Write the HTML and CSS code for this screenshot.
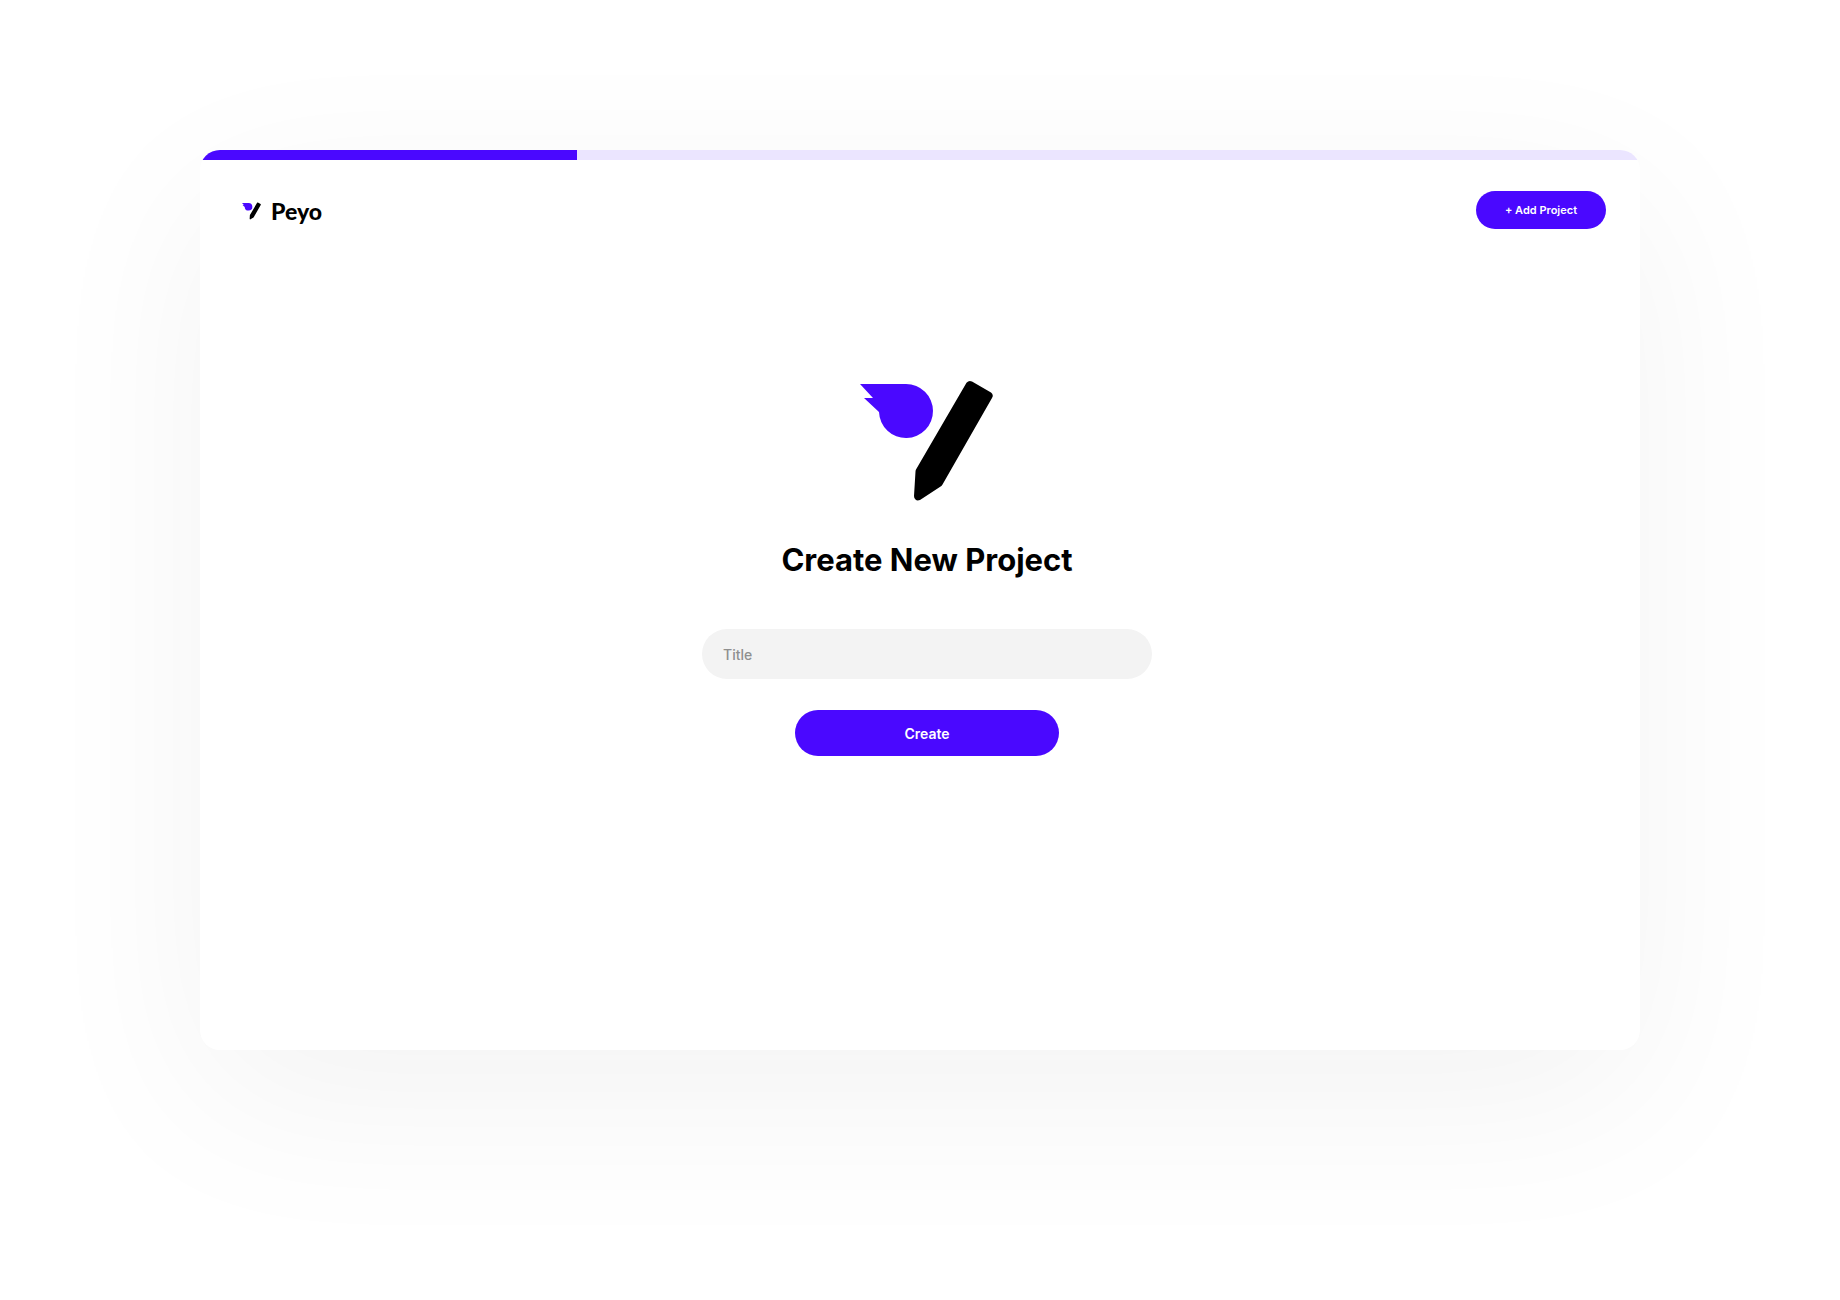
FILE: index.html
```html
<!DOCTYPE html>
<html lang="en">
<head>
<meta charset="utf-8">
<meta name="viewport" content="width=device-width, initial-scale=1">
<title>Peyo – Create New Project</title>
<link rel="stylesheet" href="styles.css">
</head>
<body>
<svg class="symbols" aria-hidden="true">
  <symbol id="mark" viewBox="0 0 134 122">
    <path fill="#4a08ff" d="M0 4H46A27 27 0 1 1 19 32L4 18H13Z"/>
    <path fill="#000" d="M106.500 2.700Q109 0 112 1.500L131 12.500Q134 15 132 18L82.500 104.500Q82 105.500 81 106.200L60 120Q57 121 55.500 119.500Q54 118.500 54 116L55.500 91.500Q55.500 90.500 56 89.500Z"/>
  </symbol>
</svg>
<div class="window">
  <div class="progress"><div class="progress-value" style="width: 26.200%"></div></div>
  <header class="topbar">
    <a class="brand" href="#"><svg class="brand-mark" aria-hidden="true"><use href="#mark"/></svg><span>Peyo</span></a>
    <button class="button button-small" type="button">+ Add Project</button>
  </header>
  <main class="content">
    <svg class="hero-mark" aria-hidden="true"><use href="#mark"/></svg>
    <h1 class="heading">Create New Project</h1>
    <form class="form">
      <input class="field" type="text" placeholder="Title" aria-label="Title">
      <button class="button button-large" type="button">Create</button>
    </form>
  </main>
</div>
</body>
</html>
```
FILE: styles.css
```css
* { box-sizing: border-box; }

body {
  margin: 0;
  min-height: 100vh;
  padding: 150px 200px 250px;
  display: flex;
  background: #fff;
  color: #000;
  font-family: Inter, "Liberation Sans", sans-serif;
}

.symbols { position: absolute; width: 0; height: 0; }

.window {
  flex: 1;
  display: flex;
  flex-direction: column;
  overflow: hidden;
  border-radius: 20px;
  background: #fff;
  box-shadow: 0 50px 180px rgba(0, 0, 0, 0.05);
}

.progress { height: 10px; background: #ebe5ff; }
.progress-value { height: 100%; background: #4a08ff; }

.topbar {
  display: flex;
  align-items: center;
  justify-content: space-between;
  padding: 31px 34px 0 42px;
}

.brand {
  display: flex;
  align-items: center;
  gap: 10px;
  padding-top: 2px;
  color: #000;
  font-family: Lato, Inter, sans-serif;
  font-size: 23px;
  font-weight: 900;
  line-height: 32px;
  text-decoration: none;
}
.brand-mark { width: 19px; height: 18px; }

.button {
  border: 0;
  border-radius: 32px;
  background: #4a08ff;
  color: #fff;
  font-family: inherit;
  font-weight: 600;
  cursor: pointer;
}
.button-small { width: 130px; height: 38px; padding: 0; font-size: 11px; }
.button-large { width: 264px; height: 46px; font-size: 14px; }

.content {
  display: flex;
  flex-direction: column;
  align-items: center;
  padding: 151px 0 0 14px;
}
.hero-mark { width: 134px; height: 122px; }
.heading {
  margin: 38px 0 49px;
  font-size: 31px;
  font-weight: 700;
  line-height: 40px;
}

.form {
  display: flex;
  flex-direction: column;
  align-items: center;
  gap: 31px;
  width: 450px;
  max-width: 100%;
}
.field {
  width: 100%;
  height: 50px;
  padding: 0 21px;
  border: 0;
  border-radius: 25px;
  background: #f3f3f3;
  font-family: inherit;
  font-size: 14px;
  font-weight: 500;
}
.field::placeholder { color: #8f8f8f; opacity: 1; }
```
